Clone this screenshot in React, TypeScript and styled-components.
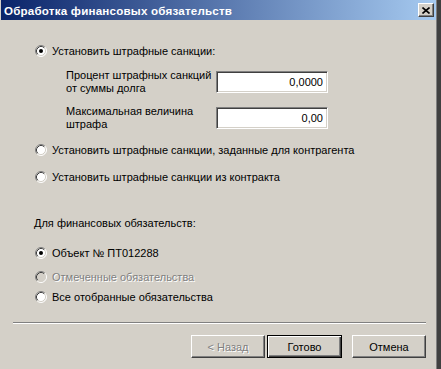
import React from "react";
import styled, { createGlobalStyle } from "styled-components";

const GlobalStyle = createGlobalStyle`
  html, body {
    margin: 0;
    padding: 0;
    background: #404040;
  }
  body {
    font-family: "Liberation Sans", Arial, sans-serif;
    font-size: 11px;
  }
`;

const Frame = styled.div`
  width: 441px;
  height: 369px;
  display: flex;
  background: #404040;
  overflow: hidden;
`;

const Window = styled.div`
  width: 437px;
  height: 100%;
  box-sizing: border-box;
  padding-left: 1px;
  background: #d4d0c8;
  border-right: 1px solid #808080;
  display: flex;
  flex-direction: column;
`;

// Title bar with the classic gradient
const TitleBar = styled.div`
  height: 20px;
  display: flex;
  align-items: center;
  justify-content: space-between;
  padding: 0 2px 0 3px;
  background: linear-gradient(to right, #0a246a, #a6caf0);
`;

const Title = styled.span`
  color: #fff;
  font-weight: bold;
  font-size: 11.6px;
  letter-spacing: 0.2px;
  white-space: nowrap;
`;

const CloseButton = styled.button`
  width: 16px;
  height: 14px;
  padding: 0;
  box-sizing: border-box;
  background: #d4d0c8;
  border: 1px solid;
  border-color: #fff #404040 #404040 #fff;
  box-shadow: inset -1px -1px #808080;
  display: flex;
  align-items: center;
  justify-content: center;
`;

const Body = styled.div`
  flex: 1;
  display: flex;
  flex-direction: column;
  padding: 0 10px 0 12px;
`;

const Options = styled.div`
  display: flex;
  flex-direction: column;
  padding-left: 22px;
`;

const RadioRow = styled.label<{ $top: number; $disabled?: boolean }>`
  height: 20px;
  margin-top: ${(p) => p.$top}px;
  display: flex;
  align-items: center;
  gap: 5px;
  color: ${(p) => (p.$disabled ? "#808080" : "#000")};
  text-shadow: ${(p) => (p.$disabled ? "1px 1px 0 #fff" : "none")};
  white-space: nowrap;
`;

const FieldRow = styled.div<{ $top: number }>`
  margin-top: ${(p) => p.$top}px;
  margin-left: 31px;
  display: grid;
  grid-template-columns: 150px 112px;
  align-items: center;
`;

const FieldLabel = styled.div`
  line-height: 13px;
  color: #000;
  white-space: nowrap;
`;

const NumberInput = styled.input`
  width: 112px;
  height: 22px;
  box-sizing: border-box;
  margin: 0;
  padding: 0 4px 0 2px;
  border: 1px solid;
  border-color: #808080 #fff #fff #808080;
  box-shadow: inset 1px 1px #404040, inset -1px -1px #d4d0c8;
  background: #fff;
  font-family: "Liberation Sans", Arial, sans-serif;
  font-size: 11px;
  color: #000;
  text-align: right;
  outline: none;
`;

const GroupLabel = styled.div<{ $top: number }>`
  height: 20px;
  margin-top: ${(p) => p.$top}px;
  margin-left: -1px;
  display: flex;
  align-items: center;
  color: #000;
`;

const Separator = styled.div<{ $top: number }>`
  margin-top: ${(p) => p.$top}px;
  border-top: 1px solid #808080;
  border-bottom: 1px solid #fff;
`;

const ButtonBar = styled.div`
  margin-top: 11px;
  display: flex;
  justify-content: flex-end;
`;

const Button = styled.button<{ $default?: boolean; $gap?: number }>`
  width: ${(p) => (p.$default ? 75 : 74)}px;
  height: 23px;
  box-sizing: border-box;
  margin: 0 0 0 ${(p) => p.$gap ?? 0}px;
  padding: 0;
  background: #d4d0c8;
  font-family: "Liberation Sans", Arial, sans-serif;
  font-size: 11px;
  color: #000;
  border: 1px solid;
  border-color: ${(p) =>
    p.$default ? "#000" : "#fff #404040 #404040 #fff"};
  box-shadow: ${(p) =>
    p.$default
      ? "inset 1px 1px #fff, inset -1px -1px #404040, inset -2px -2px #808080"
      : "inset -1px -1px #808080"};

  &:disabled {
    color: #808080;
    text-shadow: 1px 1px 0 #fff;
  }
`;

const RadioMark: React.FC<{ checked?: boolean; disabled?: boolean }> = ({
  checked,
  disabled,
}) => (
  <svg width="12" height="12" viewBox="0 0 12 12" style={{ flex: "none" }}>
    <circle cx="6" cy="6" r="5" fill={disabled ? "#d4d0c8" : "#fff"} />
    <path d="M2.11 9.89A5.5 5.5 0 0 1 9.89 2.11" fill="none" stroke="#808080" />
    <path d="M9.89 2.11A5.5 5.5 0 0 1 2.11 9.89" fill="none" stroke="#fff" />
    <path d="M2.82 9.18A4.5 4.5 0 0 1 9.18 2.82" fill="none" stroke="#404040" />
    <path d="M9.18 2.82A4.5 4.5 0 0 1 2.82 9.18" fill="none" stroke="#d4d0c8" />
    {checked && <circle cx="6" cy="6" r="2" fill="#000" />}
  </svg>
);

const App: React.FC = () => {
  return (
    <Frame>
      <GlobalStyle />
      <Window>
        <TitleBar>
          <Title>Обработка финансовых обязательств</Title>
          <CloseButton aria-label="Закрыть">
            <svg width="8" height="7" viewBox="0 0 8 7">
              <path d="M0.5 0.5L7.5 6.5M7.5 0.5L0.5 6.5" stroke="#000" strokeWidth="1.6" />
            </svg>
          </CloseButton>
        </TitleBar>
        <Body>
          <Options>
            <RadioRow $top={21}>
              <RadioMark checked />
              Установить штрафные санкции:
            </RadioRow>
            <FieldRow $top={8}>
              <FieldLabel>
                Процент штрафных санкций
                <br />
                от суммы долга
              </FieldLabel>
              <NumberInput readOnly value="0,0000" />
            </FieldRow>
            <FieldRow $top={10}>
              <FieldLabel>
                Максимальная величина
                <br />
                штрафа
              </FieldLabel>
              <NumberInput readOnly value="0,00" />
            </FieldRow>
            <RadioRow $top={9}>
              <RadioMark />
              Установить штрафные санкции, заданные для контрагента
            </RadioRow>
            <RadioRow $top={7}>
              <RadioMark />
              Установить штрафные санкции из контракта
            </RadioRow>
            <GroupLabel $top={26}>Для финансовых обязательств:</GroupLabel>
            <RadioRow $top={10}>
              <RadioMark checked />
              Объект № ПТ012288
            </RadioRow>
            <RadioRow $top={4} $disabled>
              <RadioMark disabled />
              Отмеченные обязательства
            </RadioRow>
            <RadioRow $top={0}>
              <RadioMark />
              Все отобранные обязательства
            </RadioRow>
          </Options>
          <Separator $top={15} />
          <ButtonBar>
            <Button disabled>&lt; Назад</Button>
            <Button $default $gap={2}>
              Готово
            </Button>
            <Button $gap={10}>Отмена</Button>
          </ButtonBar>
        </Body>
      </Window>
    </Frame>
  );
};

export default App;
